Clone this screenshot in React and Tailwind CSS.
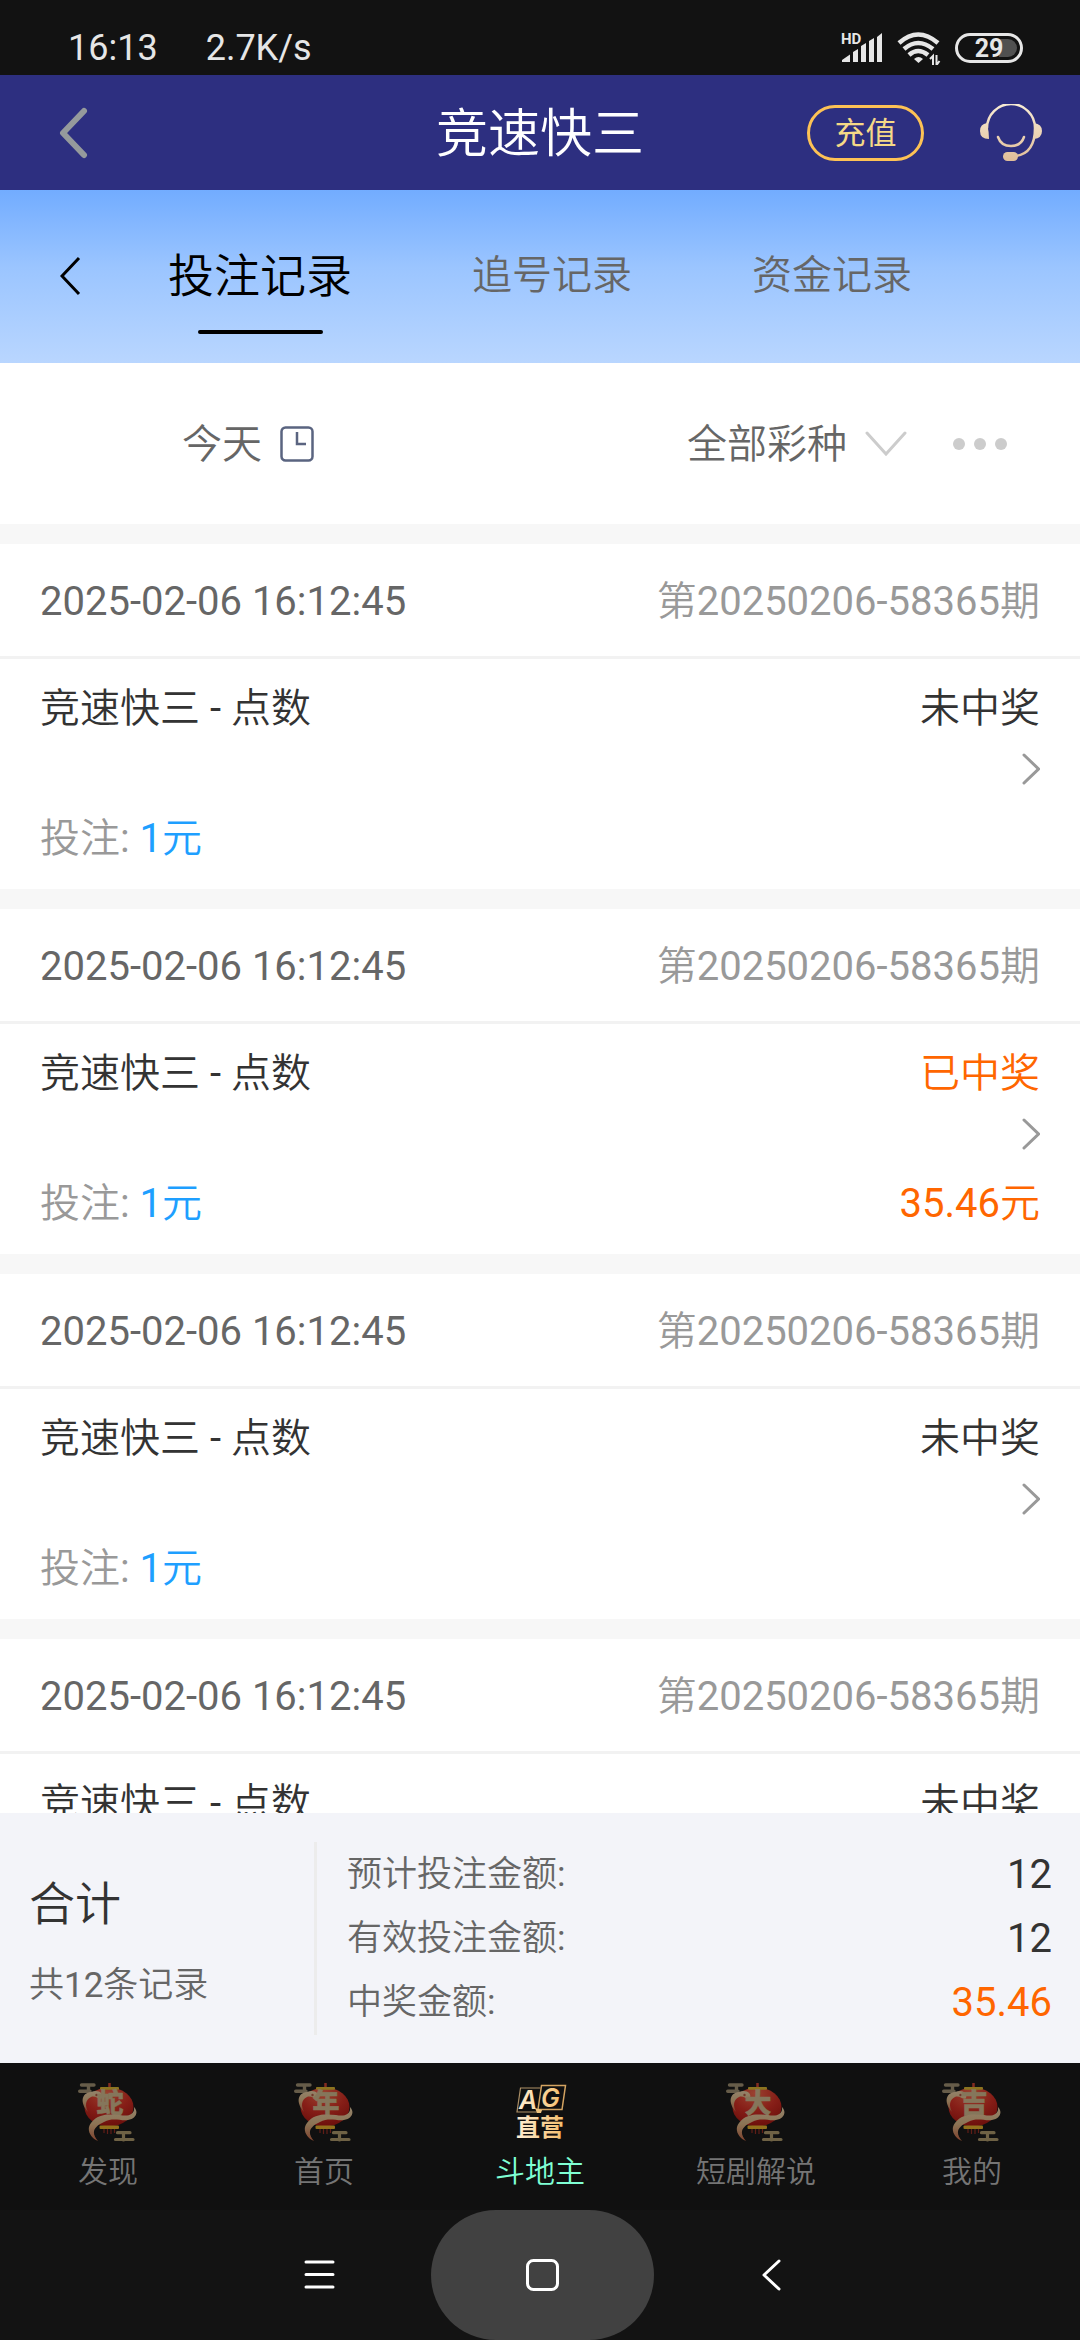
import React, { useState } from "react";

const records = [
    { id: 1, time: "2025-02-06 16:12:45", issue: "第20250206-58365期", name: "竞速快三 - 点数", bet: "1元", won: false },
    { id: 2, time: "2025-02-06 16:12:45", issue: "第20250206-58365期", name: "竞速快三 - 点数", bet: "1元", won: true, prize: "35.46元" },
    { id: 3, time: "2025-02-06 16:12:45", issue: "第20250206-58365期", name: "竞速快三 - 点数", bet: "1元", won: false },
    { id: 4, time: "2025-02-06 16:12:45", issue: "第20250206-58365期", name: "竞速快三 - 点数", bet: "1元", won: false },
];

const totals = [
    { label: "预计投注金额:", value: "12" },
    { label: "有效投注金额:", value: "12" },
    { label: "中奖金额:", value: "35.46", highlight: true },
];

const menu = [
    { label: "发现", glyph: "蛇" },
    { label: "首页", glyph: "年" },
    { label: "斗地主", active: true },
    { label: "短剧解说", glyph: "大" },
    { label: "我的", glyph: "吉" },
];

const StatusBar = () => (
    <div className="flex h-[75px] shrink-0 items-center justify-between bg-[#121212] pl-[68px] pr-[57px] pt-[21px] text-[#e6e6e6]">
        <div className="flex items-center gap-[48px] text-[36px] leading-[48px]">
            <span>16:13</span>
            <span>2.7K/s</span>
        </div>
        <div className="flex items-center gap-[14px]">
            <svg width="42" height="34" viewBox="0 0 42 34" fill="currentColor">
                <text x="0" y="13" fontSize="15" fontWeight="700">HD</text>
                <path d="M1 31 V29 L9 23.500 V31 Z M12 31 V21 L17 18 V31 Z M20 31 V15 L25 12 V31 Z M28 31 V10 L33 7 V31 Z M36 31 V6 L41 2 V31 Z" />
            </svg>
            <svg width="44" height="34" viewBox="0 0 44 34" fill="none" stroke="currentColor" strokeWidth="4.500">
                <path d="M2 12 Q21 -5 41 12" />
                <path d="M7 18 Q21 6 36 18" />
                <path d="M12 24 Q21 16 31 24" />
                <path d="M21.500 32 L17 28 Q21.500 24 26 28 Z" fill="currentColor" stroke="none" />
                <path d="M36 34 V25 L33 28 M39.500 24 V34 L42.500 30" strokeWidth="2" />
            </svg>
            <svg width="68" height="30" viewBox="0 0 68 30">
                <rect x="1.500" y="1.500" width="65" height="27" rx="13.500" fill="none" stroke="currentColor" strokeWidth="3" />
                <path d="M44 6 H53 A9 9 0 0 1 53 24 H44 Z" fill="#505050" />
                <text x="34" y="24" fontSize="25" fontWeight="700" textAnchor="middle" fill="currentColor">29</text>
            </svg>
        </div>
    </div>
);

const Header = () => (
    <header className="grid h-[115px] shrink-0 grid-cols-[1fr_auto_1fr] items-center bg-[#2d2f80] px-[38px]">
        <button type="button" aria-label="返回" className="justify-self-start px-5">
            <svg width="30" height="52" viewBox="0 0 30 52" fill="none" stroke="#959a9c" strokeWidth="6" strokeLinecap="round" strokeLinejoin="round">
                <path d="M26 4 L5 26 L26 48" />
            </svg>
        </button>
        <h1 className="pt-1 text-[52px] font-[350] leading-[60px] text-white">竞速快三</h1>
        <div className="flex items-center justify-end gap-[56px]">
            <button type="button" className="h-[56px] w-[117px] rounded-full border-3 border-[#fdc255] pt-0.5 text-[31px] leading-[48px] text-[#f5d987]">
                充值
            </button>
            <button type="button" aria-label="客服">
                <svg width="62" height="58" viewBox="0 0 62 58" fill="none" strokeLinecap="round">
                    <defs>
                        <linearGradient id="sand" x1="0" y1="0" x2="0" y2="58" gradientUnits="userSpaceOnUse">
                            <stop offset="0" stopColor="#f8ecd4" />
                            <stop offset="1" stopColor="#e0bd98" />
                        </linearGradient>
                    </defs>
                    <path d="M7 24 A24 24 0 0 1 55 24 C55 40 49 50 36 52" stroke="url(#sand)" strokeWidth="2.500" />
                    <path d="M18 33 Q21 42 31 42 Q41 42 44 33" stroke="url(#sand)" strokeWidth="2.500" />
                    <path d="M7 19 Q9 28 9 35 Q0 35 0 27 Q0 20 7 19 Z M54 19 Q62 20 62 27 Q62 34 54 35 Z" fill="url(#sand)" />
                    <rect x="23" y="48" width="15" height="9" rx="4.500" fill="url(#sand)" />
                </svg>
            </button>
        </div>
    </header>
);

const Tabs = () => {
    const [current, setCurrent] = useState("投注记录");

    return (
        <nav className="flex h-[173px] shrink-0 items-start bg-linear-to-b from-[#72acff] via-[#9bc5ff] via-45% to-[#b9d6ff] pl-[60px] pt-[56px]">
            <button type="button" aria-label="返回" className="mr-[86px] flex h-[60px] items-center">
                <svg width="22" height="40" viewBox="0 0 22 40" fill="none" stroke="#000" strokeWidth="3">
                    <path d="M19 2 L2 20 L19 38" />
                </svg>
            </button>
            <div className="flex items-start gap-[120px]">
                {["投注记录", "追号记录", "资金记录"].map((tab) => (
                    <button
                        key={tab}
                        type="button"
                        onClick={() => setCurrent(tab)}
                        className={`flex flex-col items-center gap-[24px] font-[350] leading-[60px] ${current === tab ? "text-[46px] text-black" : "text-[40px] text-[#666]"}`}
                    >
                        {tab}
                        {current === tab && <span className="h-1 w-[125px] rounded-full bg-black" />}
                    </button>
                ))}
            </div>
        </nav>
    );
};

const Filters = () => (
    <div className="flex h-[161px] shrink-0 items-center justify-between bg-white pl-[182px] pr-[73px] text-[40px] font-[350] leading-[60px] text-[#666]">
        <button type="button" className="flex items-center gap-[18px]">
            <span className="pt-0.5">今天</span>
            <svg width="34" height="36" viewBox="0 0 34 36" fill="none" stroke="#5a6480" strokeWidth="2.500">
                <rect x="1.500" y="1.500" width="31" height="33" rx="4" />
                <path d="M17 6 V18 H26" />
            </svg>
        </button>
        <div className="flex items-center">
            <select aria-label="彩种" className="appearance-none bg-transparent pt-0.5">
                <option>全部彩种</option>
            </select>
            <svg className="ml-[18px] mr-[46px]" width="42" height="26" viewBox="0 0 42 26" fill="none" stroke="#ccc" strokeWidth="3" strokeLinecap="round">
                <path d="M2 2 L21 23 L40 2" />
            </svg>
            <button type="button" aria-label="更多" className="flex gap-[9px]">
                <span className="size-3 rounded-full bg-[#ccc]" />
                <span className="size-3 rounded-full bg-[#ccc]" />
                <span className="size-3 rounded-full bg-[#ccc]" />
            </button>
        </div>
    </div>
);

// numbers and punctuation keep the regular weight inside light text
const Digits = ({ text }) =>
    text.split(/([\d.: -]+)/).map((part, idx) => (
        <span key={idx} className={idx % 2 ? "font-normal" : ""}>{part}</span>
    ));

const RecordCard = ({ record }) => (
    <li className="border-t-[20px] border-[#f7f7f7] bg-white text-[40px] font-[350]">
        <div className="flex h-[115px] items-center justify-between border-b-3 border-[#f2f2f2] px-10 pt-1">
            <time className="font-normal text-[#666]">{record.time}</time>
            <span className="text-[#999]"><Digits text={record.issue} /></span>
        </div>
        <a href="#detail" className="block px-10 pb-3.5 pt-5">
            <div className="flex justify-between leading-[60px] text-[#333]">
                <span><Digits text={record.name} /></span>
                <span className={record.won ? "text-[#ff6600]" : ""}>{record.won ? "已中奖" : "未中奖"}</span>
            </div>
            <div className="flex h-[64px] items-start justify-end pt-3.5">
                <svg width="18" height="32" viewBox="0 0 18 32" fill="none" stroke="#999" strokeWidth="3" strokeLinecap="round">
                    <path d="M2 2 L16.500 16 L2 30" />
                </svg>
            </div>
            <div className="flex justify-between leading-[72px]">
                <span className="text-[#999]"><Digits text="投注: " /><span className="text-[#1e9fff]"><Digits text={record.bet} /></span></span>
                {record.prize && <span className="text-[#ff6600]"><Digits text={record.prize} /></span>}
            </div>
        </a>
    </li>
);

const Summary = () => (
    <section className="flex h-[250px] shrink-0 items-center bg-[#f3f4f9]">
        <div className="flex w-[314px] shrink-0 flex-col gap-[28px] pl-[29px] pt-2 font-[350]">
            <p className="text-[46px] leading-[60px] text-[#333]">合计</p>
            <p className="text-[35px] leading-[48px] text-[#666]"><Digits text="共12条记录" /></p>
        </div>
        <dl className="flex h-[193px] flex-1 flex-col justify-center border-l-3 border-[#ececec] pl-[30px] pr-[28px] pt-0.5">
            {totals.map((row) => (
                <div key={row.label} className="flex items-center justify-between leading-[64px]">
                    <dt className="text-[35px] font-[350] text-[#666]"><Digits text={row.label} /></dt>
                    <dd className={`text-[40px] ${row.highlight ? "text-[#ff6600]" : "text-[#333]"}`}>{row.value}</dd>
                </div>
            ))}
        </dl>
    </section>
);

const Lantern = ({ glyph }) => (
    <svg width="60" height="60" viewBox="0 0 60 60">
        <defs>
            <radialGradient id="lanternRed" cx="0.450" cy="0.150" r="0.850">
                <stop offset="0" stopColor="#9a4230" />
                <stop offset="0.550" stopColor="#861e17" />
                <stop offset="1" stopColor="#6c0f0c" />
            </radialGradient>
            <linearGradient id="snakeSkin" x1="0" y1="0" x2="0" y2="1">
                <stop offset="0" stopColor="#94836a" />
                <stop offset="0.500" stopColor="#8c7455" />
                <stop offset="1" stopColor="#7d402c" />
            </linearGradient>
        </defs>
        <path d="M3.500 2 H16 M1.700 8.300 H12 M10.500 2 V8" stroke="#665c49" strokeWidth="3.400" strokeLinecap="round" />
        <path d="M39.500 49.700 H52 M37.500 56.500 H55 M45.500 50 V57" stroke="#6f6245" strokeWidth="3.200" strokeLinecap="round" />
        <path d="M31.500 0 V5" stroke="#842c20" strokeWidth="2.500" />
        <path d="M26 45 V50 M29.500 45 V51 M33 45 V51 M36.500 45 V50" stroke="#601d16" strokeWidth="1.200" />
        <ellipse cx="31" cy="24" rx="24.500" ry="19.500" fill="url(#lanternRed)" />
        <rect x="22" y="4" width="19" height="2.800" rx="1" fill="#8b7420" />
        <rect x="21.500" y="42.500" width="19.500" height="3.500" rx="1" fill="#92701c" />
        <path d="M10 29 C2 20 3 10 13 9 C20 6 26 10 24 15 C22 18 18 12 13 14 C7 17 7 23 10 29 Z" fill="url(#snakeSkin)" />
        <circle cx="18.500" cy="12" r="1.200" fill="#70392c" />
        <text x="32" y="30" fontSize="27" fontWeight="900" textAnchor="middle" fill="#85765b" stroke="#85765b" strokeWidth="0.500">{glyph}</text>
        <path d="M56 24 C61 29 58 36 50 37 C42 38 35 34 26 39 C15 44 13 50 20 58 C12 55 8 46 13 40 C20 30 32 31 42 32 C51 34 57 31 56 24 Z" fill="url(#snakeSkin)" />
    </svg>
);

const AgLogo = () => (
    <svg width="60" height="60" viewBox="0 0 60 60">
        <defs>
            <linearGradient id="gold" x1="5" y1="0" x2="55" y2="0" gradientUnits="userSpaceOnUse">
                <stop offset="0" stopColor="#fff0d8" />
                <stop offset="1" stopColor="#f5bd68" />
            </linearGradient>
        </defs>
        <path d="M30.500 5 H10.500 L7 29 H30 L31 26.500" fill="none" stroke="#ad9067" strokeWidth="1.200" />
        <path d="M31.500 2.500 H55.500 L52 26.500 H28 Z" fill="none" stroke="#d3a361" strokeWidth="1.500" />
        <path d="M25 25 L32 27 L31 30 H27 Z" fill="#efc27d" />
        <g className="font-['Inter']" fontSize="25" fontStyle="italic" fontWeight="600" fill="url(#gold)">
            <text x="9" y="26">A</text>
            <text x="31" y="24">G</text>
        </g>
        <text x="30" y="53" fontSize="24" fontWeight="700" textAnchor="middle" fill="url(#gold)">直营</text>
    </svg>
);

const BottomMenu = () => (
    <nav className="grid h-[147px] shrink-0 grid-cols-5 bg-[#101010] pt-[20px]">
        {menu.map((item) => (
            <a key={item.label} href="#menu" className="flex flex-col items-center gap-[5px]">
                {item.active ? <AgLogo /> : <Lantern glyph={item.glyph} />}
                <span className={`text-[30px] font-[350] leading-[48px] ${item.active ? "text-[#7fffd4]" : "text-[#757575]"}`}>{item.label}</span>
            </a>
        ))}
    </nav>
);

const SystemNav = () => (
    <div className="flex h-[130px] shrink-0 justify-center bg-[#131313] pl-1">
        <button type="button" aria-label="最近任务" className="flex w-[223px] items-center justify-center">
            <svg width="32" height="32" viewBox="0 0 32 32" stroke="#fff" strokeWidth="3" strokeLinecap="round">
                <path d="M3 3 H30 M3 15.500 H30 M3 28 H30" />
            </svg>
        </button>
        <button type="button" aria-label="主屏幕" className="flex w-[223px] items-center justify-center rounded-full bg-[#414141]">
            <svg width="34" height="34" viewBox="0 0 34 34" fill="none" stroke="#fff" strokeWidth="3">
                <rect x="2.500" y="2.500" width="30" height="29" rx="6" />
            </svg>
        </button>
        <button type="button" aria-label="返回" className="flex w-[223px] items-center justify-center">
            <svg width="34" height="34" viewBox="0 0 34 34" fill="none" stroke="#fff" strokeWidth="3" strokeLinecap="round" strokeLinejoin="round">
                <path d="M31 3 L16 17 L31 31" />
            </svg>
        </button>
    </div>
);

const App = () => {
    return (
        <div className="flex h-screen w-full flex-col bg-white font-['Roboto','Noto_Sans_CJK_SC',sans-serif]">
            <StatusBar />
            <Header />
            <Tabs />
            <Filters />
            <ul className="min-h-0 flex-1 overflow-y-auto [scrollbar-width:none]">
                {records.map((record) => (
                    <RecordCard key={record.id} record={record} />
                ))}
            </ul>
            <Summary />
            <BottomMenu />
            <SystemNav />
        </div>
    );
};

export default App;
